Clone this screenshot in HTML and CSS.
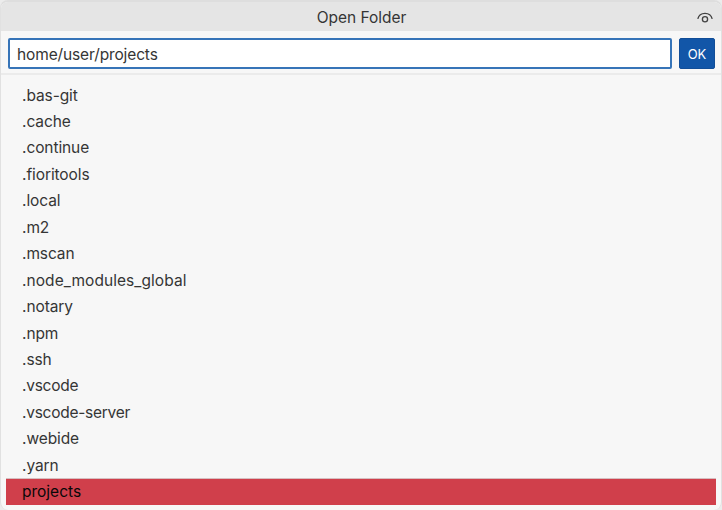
FILE: index.html
```html
<!DOCTYPE html>
<html lang="en">
<head>
<meta charset="utf-8">
<title>Open Folder</title>
<link rel="stylesheet" href="styles.css">
</head>
<body>
<main class="dialog">
<header class="titlebar">
<h1 class="title">Open Folder</h1>
<button class="toggle" aria-label="Toggle hidden files"><svg viewBox="0 0 16 16" width="16" height="16"><path d="M.8 8.800C1.700 5.200 4.500 3.300 8 3.300s6.300 1.900 7.200 5.500"/><circle cx="8" cy="9.200" r="2.600"/></svg></button>
</header>
<div class="entry">
<div class="path">home/user/projects</div>
<button class="ok">OK</button>
</div>
<ul class="list">
<li>.bas-git</li>
<li>.cache</li>
<li>.continue</li>
<li>.fioritools</li>
<li>.local</li>
<li>.m2</li>
<li>.mscan</li>
<li class="loose">.node_modules_global</li>
<li>.notary</li>
<li>.npm</li>
<li>.ssh</li>
<li class="tight">.vscode</li>
<li class="tight">.vscode-server</li>
<li>.webide</li>
<li>.yarn</li>
<li class="selected">projects</li>
</ul>
</main>
</body>
</html>
```
FILE: styles.css
```css
* { box-sizing: border-box; }
body { margin: 0; background: #ececec; color: #353535; font: 15.5px/28px Inter, sans-serif; letter-spacing: -0.09px; }
.dialog { height: 510px; overflow: hidden; background: #f7f7f7; border: 1px solid #e1e1e1; border-top: 2px solid #dedede; border-bottom: 0; border-radius: 8px; }
.titlebar { height: 29px; display: grid; grid-template-columns: 33px 1fr 33px; align-items: center; background: #e5e5e5; }
.title { grid-column: 2; margin: 0; text-align: center; font-size: 15.5px; font-weight: 400; line-height: 31px; padding: 0 0 0 1px; letter-spacing: -0.03px; }
.toggle { padding: 0; border: 0; background: none; display: flex; justify-content: center; }
.toggle svg { fill: none; stroke: #444; stroke-width: 1.35; }
.entry { height: 44px; padding: 7px 6px 0 7px; display: flex; gap: 7px; border-bottom: 2px solid #ebebeb; }
.path { flex: 1; height: 31px; border: 2px solid #3674b8; border-radius: 2px; background: #fff; padding: 0 7px; line-height: 29px; letter-spacing: -0.13px; }
.ok { width: 36px; height: 31px; padding: 0; border: 1px solid #124e98; border-radius: 2px; background: #1256a8; color: #fff; font: 13px Inter, sans-serif; }
.list { list-style: none; margin: 0; padding: 6.6px 5px 0; }
.list li { height: 26.45px; padding-left: 16px; }
.list .loose { letter-spacing: 0.06px; }
.list .tight { letter-spacing: -0.27px; }
.list .selected { background: #d03f4b; color: #080808; border-top: 1px solid #d6bfc1; line-height: 25px; letter-spacing: 0; }
```
